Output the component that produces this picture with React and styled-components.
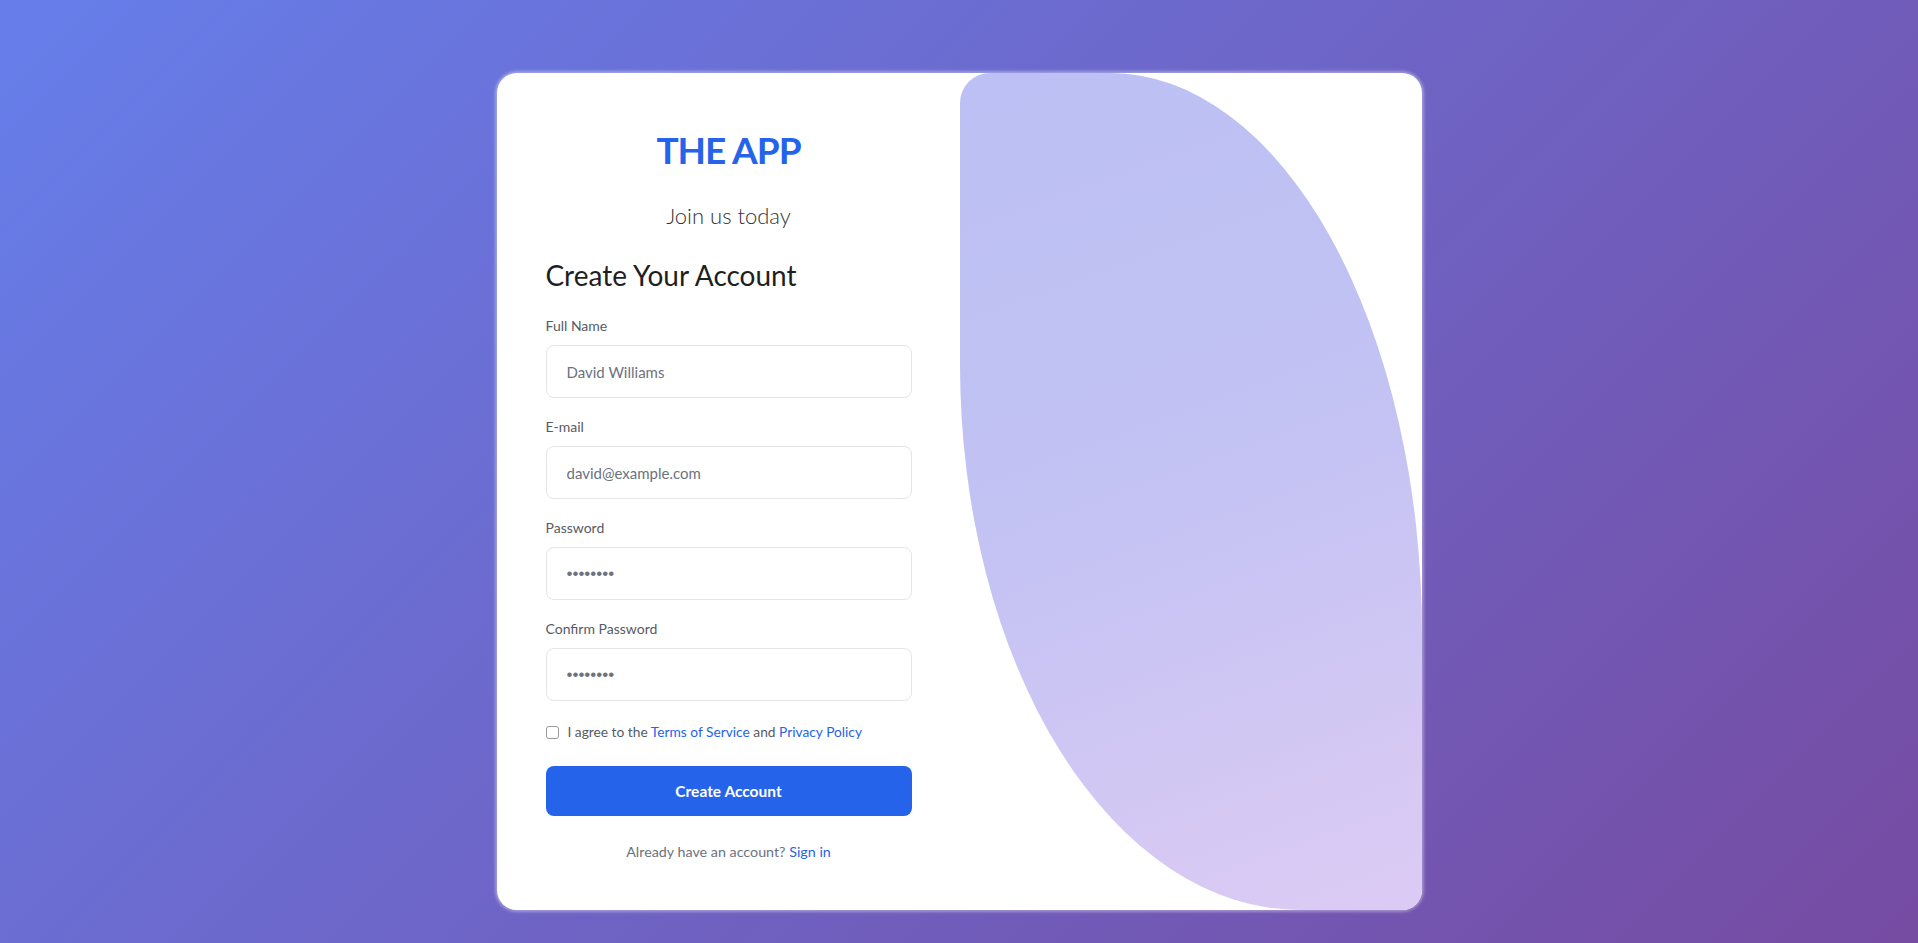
import React from "react";
import styled, { createGlobalStyle } from "styled-components";

const GlobalStyle = createGlobalStyle`
  html, body { margin: 0; padding: 0; }
  body {
    font-family: Lato, "Open Sans", "Noto Sans", sans-serif;
    background: linear-gradient(135deg, #667eea 0%, #764ba2 100%);
    min-height: 100vh;
  }
  * { box-sizing: border-box; }
`;

const Page = styled.div`
  min-height: 100vh;
  display: flex;
  justify-content: center;
  align-items: flex-start;
  padding: 73px 0 33px;
`;

const Card = styled.div`
  width: 925px;
  height: 837px;
  display: grid;
  grid-template-columns: 463px 1fr;
  background: #ffffff;
  border-radius: 20px;
  overflow: hidden;
  box-shadow: 0 0 3px 2px rgba(255, 255, 255, 0.35);
`;

const FormColumn = styled.div`
  padding: 54px 48px 48px 49px;
  display: flex;
  flex-direction: column;
`;

const Brand = styled.h1`
  margin: 0;
  text-align: center;
  font-size: 37px;
  line-height: 46px;
  font-weight: 700;
  letter-spacing: -1px;
  color: #2563eb;
`;

const Tagline = styled.p`
  margin: 29px 0 0;
  text-align: center;
  font-size: 22px;
  line-height: 28px;
  font-weight: 300;
  color: #333;
`;

const Heading = styled.h2`
  margin: 27px 0 23px;
  font-size: 28px;
  line-height: 36px;
  font-weight: 400;
  color: #1f1f1f;
`;

const Field = styled.div`
  display: flex;
  flex-direction: column;
  margin-bottom: ${(p) => (p.$last ? "21px" : "19px")};
`;

const Label = styled.label`
  font-size: 14px;
  line-height: 20px;
  color: #555b66;
  margin-bottom: 9px;
`;

const Input = styled.input`
  height: 53px;
  width: 100%;
  border: 1px solid #e3e5ea;
  border-radius: 8px;
  padding: 0 20px;
  font-family: ${(p) =>
    p.type === "password" ? '"Liberation Sans", Arial, sans-serif' : "inherit"};
  font-size: ${(p) => (p.type === "password" ? "17px" : "15px")};
  color: #6b7280;
  background: #fff;
  outline: none;
`;

const AgreeRow = styled.label`
  display: flex;
  align-items: center;
  gap: 9px;
  font-size: 13.75px;
  line-height: 20px;
  color: #555b66;
`;

const Check = styled.input`
  appearance: none;
  margin: 0;
  width: 13px;
  height: 13px;
  border: 1px solid #9a9a9a;
  border-radius: 3px;
  background: #fff;
  flex: none;
`;

const Link = styled.a`
  color: #2563eb;
  text-decoration: none;
`;

const SubmitButton = styled.button`
  margin-top: 24px;
  height: 50px;
  width: 100%;
  border: none;
  border-radius: 8px;
  background: #2563eb;
  color: #fff;
  font-family: inherit;
  font-size: 15.5px;
  font-weight: 700;
  cursor: pointer;
`;

const Footer = styled.p`
  margin: 26px 0 0;
  text-align: center;
  font-size: 14.3px;
  line-height: 20px;
  color: #6b7280;
`;

const ArtPanel = styled.div`
  background: linear-gradient(160deg, #bcc0f4 0%, #c2c2f3 45%, #dccbf4 100%);
  border-radius: 30px 312px 0 340px / 30px 562px 0 546px;
`;

const fields = [
  { id: "name", label: "Full Name", type: "text", value: "David Williams" },
  { id: "email", label: "E-mail", type: "email", value: "david@example.com" },
  { id: "pw", label: "Password", type: "password", value: "password" },
  { id: "pw2", label: "Confirm Password", type: "password", value: "password" },
];

export default function App() {
  return (
    <>
      <GlobalStyle />
      <Page>
        <Card>
          <FormColumn>
            <Brand>THE APP</Brand>
            <Tagline>Join us today</Tagline>
            <Heading>Create Your Account</Heading>
            {fields.map((f, i) => (
              <Field key={f.id} $last={i === fields.length - 1}>
                <Label htmlFor={f.id}>{f.label}</Label>
                <Input id={f.id} type={f.type} defaultValue={f.value} />
              </Field>
            ))}
            <AgreeRow>
              <Check type="checkbox" />
              <span>
                I agree to the <Link href="#">Terms of Service</Link> and{" "}
                <Link href="#">Privacy Policy</Link>
              </span>
            </AgreeRow>
            <SubmitButton type="button">Create Account</SubmitButton>
            <Footer>
              Already have an account? <Link href="#">Sign in</Link>
            </Footer>
          </FormColumn>
          <ArtPanel />
        </Card>
      </Page>
    </>
  );
}
